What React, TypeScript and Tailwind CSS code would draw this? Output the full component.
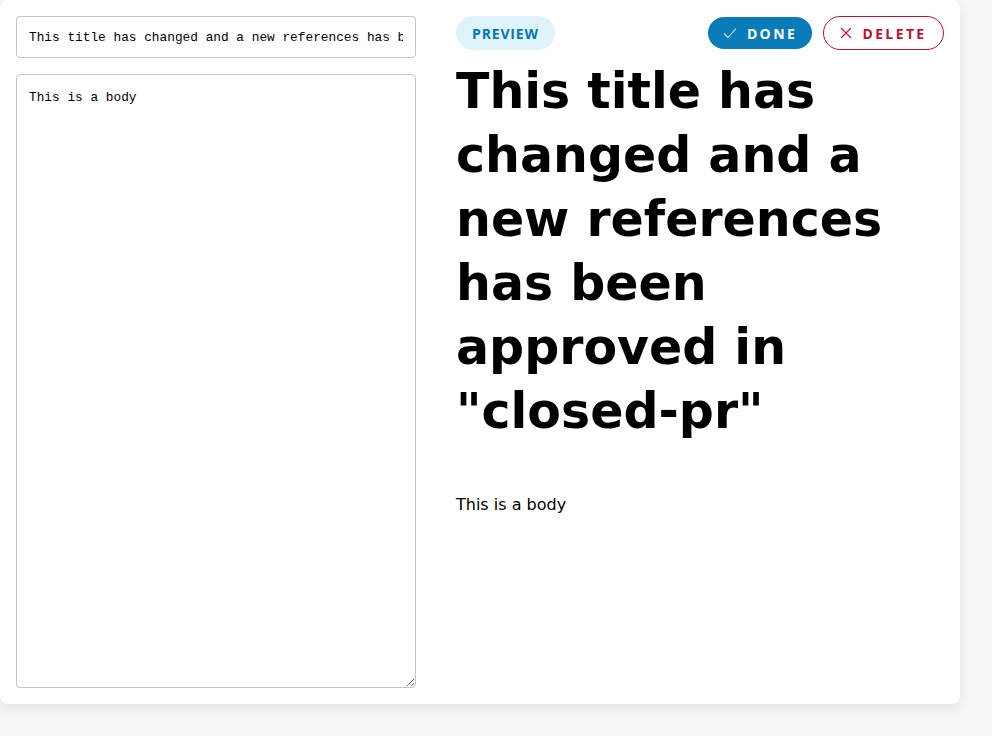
import React from "react";

const TITLE = 'This title has changed and a new references has been approved in "closed-pr"';
const BODY = "This is a body";

// Preview / edit card
const App: React.FC = () => {
    const [title, setTitle] = React.useState(TITLE);
    const [body, setBody] = React.useState(BODY);

    return (
        <div className="min-h-[736px] bg-[#f5f6fa]">
            <div className="w-[960px] h-[704px] bg-white rounded-lg shadow-[0_4px_12px_rgba(0,0,0,0.08)] p-4 flex gap-10">
                <div className="w-[400px] flex flex-col gap-4">
                    <input
                        value={title}
                        onChange={e => setTitle(e.target.value)}
                        className="h-[42px] w-full border border-[#c4c4c8] rounded px-3 text-[12.8px] text-black outline-none"
                        style={{ fontFamily: "'Liberation Mono', monospace" }}
                    />
                    <textarea
                        value={body}
                        onChange={e => setBody(e.target.value)}
                        className="flex-1 w-full border border-[#c4c4c8] rounded px-3 py-[13px] text-[12.8px] text-black outline-none"
                        style={{ fontFamily: "'Liberation Mono', monospace" }}
                    />
                </div>

                <div className="flex-1 flex flex-col">
                    <div className="flex items-center justify-between font-['Open_Sans',sans-serif]">
                        <span className="h-[34px] px-4 rounded-full bg-[#dff3fd] text-[#0277b6] font-bold text-[14px] tracking-[0.06em] flex items-center">
                            PREVIEW
                        </span>
                        <div className="flex items-center gap-[11px]">
                            <button className="h-[32px] w-[104px] rounded-full bg-[#0a7bb9] text-white font-bold text-[14px] tracking-[0.17em] flex items-center justify-center gap-[10px]">
                                <svg width="14" height="12" viewBox="0 0 14 12" fill="none" stroke="#cfe6f3" strokeWidth="1.1">
                                    <path d="M1 6.5 L5 10.5 L13 1.5" />
                                </svg>
                                DONE
                            </button>
                            <button className="h-[34px] w-[121px] rounded-full border border-[#c8102e] text-[#c8102e] font-bold text-[14px] tracking-[0.17em] flex items-center justify-center gap-[10px]">
                                <svg width="12" height="12" viewBox="0 0 12 12" fill="none" stroke="#c8102e" strokeWidth="1.1">
                                    <path d="M1 1 L11 11 M11 1 L1 11" />
                                </svg>
                                DELETE
                            </button>
                        </div>
                    </div>
                    <h1 className="mt-[10px] text-[49px] leading-[64px] font-bold text-black font-['DejaVu_Sans',sans-serif]">
                        {title}
                    </h1>
                    <p className="mt-[49px] text-[16px] leading-6 text-black font-['DejaVu_Sans',sans-serif]">
                        {body}
                    </p>
                </div>
            </div>
        </div>
    );
};

export default App;
